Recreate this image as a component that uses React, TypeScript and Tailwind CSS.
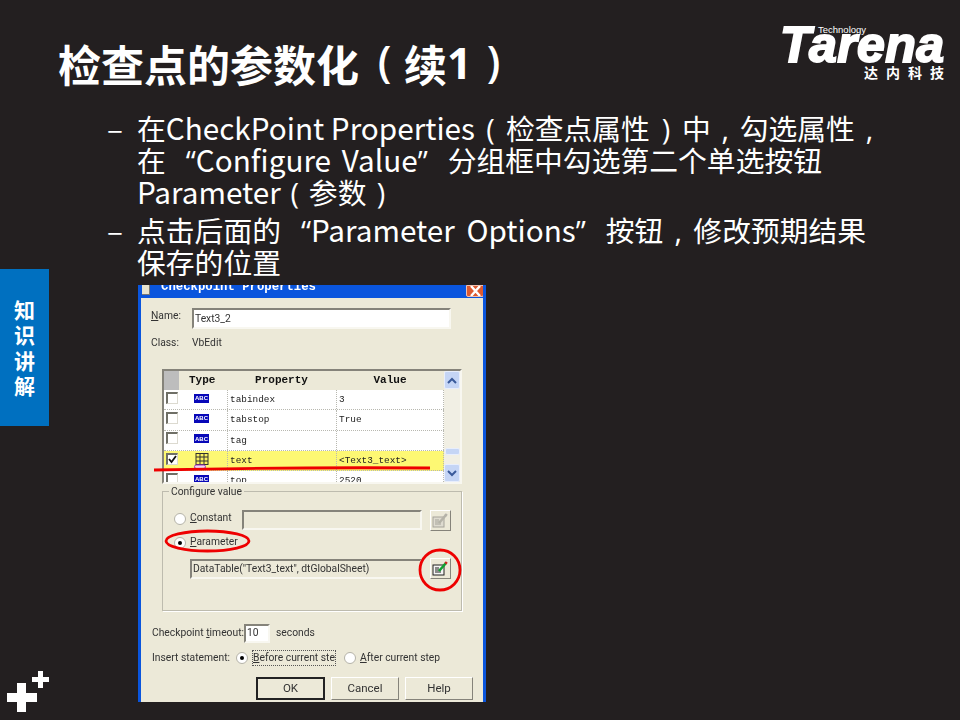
import React from "react";

const cn = '"Open Sans","Noto Sans CJK SC",sans-serif';

function Abc() {
  return (
    <div className="flex items-center justify-center w-[15px] h-[9px] -mt-[3px] -ml-[3px] bg-[#0808b8] text-white text-[6px] font-bold leading-none font-['Liberation_Sans']">
      ABC
    </div>
  );
}

function TableIcon() {
  return (
    <svg className="-ml-[3px]" width="16" height="16" viewBox="0 0 16 16">
      <rect x="2" y="0.5" width="12" height="11" fill="#f8f060" stroke="#303030" />
      <path d="M6 0v11M10 0v11M2 4h12M2 8h12" stroke="#303030" />
      <rect x="0.5" y="12" width="11" height="3.5" rx="1.7" fill="#f0d8f0" stroke="#a030c0" />
    </svg>
  );
}

function Check({ on }: { on?: boolean }) {
  return (
    <div className="flex items-center justify-center w-[12px] h-[12px] -mt-[4px] -ml-[1px] bg-white border-t-2 border-l-2 border-t-[#6f6f66] border-l-[#6f6f66] border-r border-b border-r-[#dcdad0] border-b-[#dcdad0]">
      {on && (
        <svg width="9" height="9" viewBox="0 0 9 9">
          <path d="M1 4l2.5 3L8 1" fill="none" stroke="#111" strokeWidth="1.8" />
        </svg>
      )}
    </div>
  );
}

function Row({ on, icon, prop, value, hi }: { on?: boolean; icon: React.ReactNode; prop: string; value: string; hi?: boolean }) {
  return (
    <div className={`grid grid-cols-[63px_109px_108px] h-[20.3px] shrink-0 items-center border-b border-dotted border-b-[#b8b8b0] font-['Liberation_Mono'] text-[9.4px] text-[#222] ${hi ? "bg-[#fdf873]" : "bg-white"}`}>
      <div className="flex items-center h-full">
        <div className="w-[31px] pl-[3px]"><Check on={on} /></div>
        <div className="w-[16px] flex justify-center">{icon}</div>
      </div>
      <div className="pl-[2px] h-full flex items-center border-l border-dotted border-l-[#b8b8b0]">{prop}</div>
      <div className="pl-[2px] h-full flex items-center border-l border-r border-dotted border-l-[#b8b8b0] border-r-[#b8b8b0]">{value}</div>
    </div>
  );
}

function ScrollBtn({ up }: { up?: boolean }) {
  return (
    <div className="w-[16px] h-[18px] rounded-[2px] bg-[#c5d5f5] border border-[#e8eefc] flex items-center justify-center">
      <svg width="10" height="7" viewBox="0 0 10 7">
        <path d={up ? "M1 6l4-4 4 4" : "M1 1l4 4 4-4"} fill="none" stroke="#3a5a9a" strokeWidth="2" />
      </svg>
    </div>
  );
}

function Radio({ on }: { on?: boolean }) {
  return (
    <div className="w-[12px] h-[12px] rounded-full bg-white border border-[#b5b3a8] flex items-center justify-center shrink-0">
      {on && <div className="w-[4px] h-[4px] rounded-full bg-black" />}
    </div>
  );
}

function Field({ w, children }: { w: string; children?: React.ReactNode }) {
  return (
    <div className={`${w} h-[20px] flex items-center pl-[1px] pt-[2px] border-2 border-t-[#85837a] border-l-[#85837a] border-r-[#f8f7f0] border-b-[#f8f7f0] whitespace-nowrap`}>
      {children}
    </div>
  );
}

function EditBtn({ active }: { active?: boolean }) {
  return (
    <div className="w-[21px] h-[21px] bg-[#ece9d8] border border-t-white border-l-white border-r-[#85837a] border-b-[#85837a] flex items-center justify-center">
      <svg width="17" height="15" viewBox="0 0 17 15">
        <rect x="1" y="4" width="11" height="10" fill={active ? "#f4f4f4" : "#dedbd0"} stroke={active ? "#202020" : "#a5a39a"} />
        <path d="M3 7h4M3 9h6M3 11h6" stroke={active ? "#202020" : "#a5a39a"} />
        <path d="M7 10l7-8" stroke={active ? "#10a030" : "#b5b3a8"} strokeWidth="2.6" />
        <path d="M13.4 2.6l1.4-1.6" stroke={active ? "#d02020" : "#b5b3a8"} strokeWidth="2.6" />
      </svg>
    </div>
  );
}

function Btn({ label, def }: { label: string; def?: boolean }) {
  return (
    <div className={`h-[23px] flex items-center justify-center bg-[#ece9d8] ${def ? "w-[69px] border-2 border-[#222]" : "w-[68px] border border-t-white border-l-white border-r-[#85837a] border-b-[#85837a]"}`}>
      {label}
    </div>
  );
}

function Dialog() {
  return (
    <div className="relative ml-[80px] w-[348px] h-[417px] bg-[#0a55dd] px-[3px] flex flex-col overflow-hidden blur-[0.35px] font-['Roboto'] text-[10.3px] text-[#333] leading-none">
      <div className="h-[13px] shrink-0 flex items-start justify-between overflow-hidden">
        <div className="flex items-start pl-[1px] gap-[11px]">
          <div className="w-[8px] h-[10px] bg-[#e8e4d0] border-r border-b border-[#777]" />
          <div className="font-['Liberation_Mono'] font-bold text-[12.3px] leading-[11px] -mt-[3px] text-white whitespace-nowrap">Checkpoint Properties</div>
        </div>
        <div className="w-[18px] h-[12px] mr-[-1px] bg-[#dd5a30] border border-[#f0c0b0] rounded-b-[2px] flex items-center justify-center">
          <svg width="11" height="10" viewBox="0 0 11 10"><path d="M1 0l9 10M10 0L1 10" stroke="#fff" strokeWidth="2.4" /></svg>
        </div>
      </div>
      <div className="flex-1 bg-[#ece9d8] pt-[10px] pl-[10px]">
        <div className="flex items-center h-[21px]">
          <div className="w-[41px] -mt-[4px]"><span className="underline">N</span>ame:</div>
          <div className="w-[259px] h-[21px] flex items-center pl-[1px] pt-[1px] bg-white border-2 border-t-[#85837a] border-l-[#85837a] border-r-[#f8f7f0] border-b-[#f8f7f0]">Text3_2</div>
        </div>
        <div className="flex items-center h-[20px] mt-[4px] pt-[1px]">
          <div className="w-[41px]">Class:</div>
          <div>VbEdit</div>
        </div>
        <div className="ml-[11px] mt-[16px] w-[300px] h-[115px] flex border-2 border-t-[#85837a] border-l-[#85837a] border-r-[#f8f7f0] border-b-[#f8f7f0] bg-[#f1efe4] overflow-hidden">
          <div className="w-[280px] flex flex-col shrink-0 overflow-hidden">
            <div className="grid grid-cols-[63px_109px_108px] h-[19px] shrink-0 items-center bg-[#ece9d8] font-['Liberation_Mono'] font-bold text-[11px] text-[#111] text-center">
              <div className="flex items-center h-full">
                <div className="w-[15px] h-full bg-[#bdbdbd]" />
                <div className="pl-[10px]">Type</div>
              </div>
              <div>Property</div>
              <div>Value</div>
            </div>
            <Row icon={<Abc />} prop="tabindex" value="3" />
            <Row icon={<Abc />} prop="tabstop" value="True" />
            <Row icon={<Abc />} prop="tag" value="" />
            <Row on hi icon={<TableIcon />} prop="text" value="<Text3_text>" />
            <Row icon={<Abc />} prop="top" value="2520" />
          </div>
          <div className="flex-1 flex flex-col justify-between items-center">
            <ScrollBtn up />
            <div className="flex-1 flex flex-col justify-end pb-[9px]">
              <div className="w-[15px] h-[7px] rounded-[2px] bg-[#c5d5f5] border border-[#e8eefc]" />
            </div>
            <ScrollBtn />
          </div>
        </div>
        <div className="relative ml-[11px] mt-[7px] w-[300px] h-[120px] border border-[#bdbbae] shadow-[1px_1px_0_#fff] pt-[17px] pl-[11px]">
          <div className="absolute -top-[5px] left-[6px] bg-[#ece9d8] px-[2px]">Configure value</div>
          <div className="flex items-center h-[22px]">
            <div className="flex items-center w-[68px] -mt-[3px]">
              <Radio />
              <div className="pl-[4px]"><span className="underline">C</span>onstant</div>
            </div>
            <Field w="w-[180px]" />
            <div className="ml-[8px]"><EditBtn /></div>
          </div>
          <div className="flex items-center h-[21px] mt-[1px]">
            <Radio on />
            <div className="pl-[4px]"><span className="underline">P</span>arameter</div>
          </div>
          <div className="flex items-center mt-[5px] ml-[16px]">
            <Field w="w-[232px]">DataTable("Text3_text", dtGlobalSheet)</Field>
            <div className="ml-[8px]"><EditBtn active /></div>
          </div>
        </div>
        <div className="flex items-center h-[19px] mt-[13px] pl-[1px]">
          <div className="w-[92px] whitespace-nowrap">Checkpoint <span className="underline">t</span>imeout:</div>
          <div className="w-[26px] h-[19px] flex items-center pl-[1px] bg-white border-2 border-t-[#85837a] border-l-[#85837a] border-r-[#f8f7f0] border-b-[#f8f7f0]">10</div>
          <div className="pl-[6px]">seconds</div>
        </div>
        <div className="flex items-center h-[22px] mt-[4px] pl-[1px]">
          <div className="w-[84px] whitespace-nowrap">Insert statement:</div>
          <Radio on />
          <div className="ml-[4px] w-[84px] h-[16px] flex items-center whitespace-nowrap overflow-hidden border border-dotted border-[#555]"><span className="underline">B</span>efore current step</div>
          <div className="ml-[8px]"><Radio /></div>
          <div className="pl-[4px] whitespace-nowrap"><span className="underline">A</span>fter current step</div>
        </div>
        <div className="flex gap-[6px] mt-[8px] ml-[105px] text-[11.5px]">
          <Btn label="OK" def />
          <Btn label="Cancel" />
          <Btn label="Help" />
        </div>
      </div>
      <svg className="absolute left-0 top-0" width="348" height="417" viewBox="0 0 348 417" fill="none" stroke="#ee0000" strokeWidth="2.8">
        <path d="M16 185q140-3 276-2" />
        <ellipse cx="69.5" cy="256" rx="41.5" ry="10" />
        <circle cx="302" cy="285" r="20" />
      </svg>
    </div>
  );
}

function L({ children }: { children: React.ReactNode }) {
  return <span className="text-[29.7px]">{children}</span>;
}

function Line({ children, className = "" }: { children: React.ReactNode; className?: string }) {
  return <div className={`h-[32px] whitespace-nowrap ${className}`}>{children}</div>;
}

function Item({ children, className = "" }: { children: React.ReactNode; className?: string }) {
  return (
    <div className={`flex ml-[49px] ${className}`}>
      <div className="w-[30px] shrink-0 text-[29.7px] leading-[32px]">–</div>
      <div>{children}</div>
    </div>
  );
}

export default function App() {
  return (
    <div className="w-[960px] h-[720px] bg-[#231f20] flex overflow-hidden" lang="zh-CN" style={{ fontFamily: cn }}>
      <aside className="w-[49px] shrink-0 flex flex-col pt-[269px] pb-[8px]">
        <div className="h-[157px] bg-[#0070c0] flex flex-col items-center justify-center text-white font-bold text-[21px] leading-[25.5px] font-['Noto_Sans_CJK_SC']">
          <span>知</span>
          <span>识</span>
          <span>讲</span>
          <span>解</span>
        </div>
        <svg className="mt-auto" width="49" height="41" viewBox="0 0 49 41" fill="#fff">
          <path d="M17 12h9v10h11v9H26v10h-9V31H7v-9h10z" />
          <path d="M38 0h5v6h6v5h-6v6h-5v-6h-6V6h6z" />
        </svg>
      </aside>
      <main className="flex-1 pl-[9px] flex flex-col">
        <header className="h-[112px] shrink-0 flex justify-between pr-[16px]">
          <h1 className="pt-[36px] text-[43px] leading-[54px] font-bold text-white font-['Noto_Sans_CJK_SC'] whitespace-nowrap flex">
            <span>检查点的参数化</span>
            <span className="w-[45px] pl-[6px] text-center font-['Open_Sans'] font-semibold -mt-[2px]">(</span>
            <span>续</span>
            <span className="font-['Open_Sans']">1</span>
            <span className="w-[44px] text-center font-['Open_Sans'] font-semibold -mt-[2px]">)</span>
          </h1>
          <div className="relative w-[162px] h-[56px] mt-[24px] text-white font-['Liberation_Sans'] font-bold">
            <div className="absolute left-[-2px] top-[-4px] italic text-[50px] leading-[50px] [-webkit-text-stroke:2px_white] whitespace-nowrap">
              <span className="tracking-[-1.5px]">T</span>
              <span className="tracking-[0.4px]">arena</span>
            </div>
            <div className="absolute left-[36px] top-[1px] font-normal text-[9.5px] leading-[10px] whitespace-nowrap">Technology</div>
            <div className="absolute right-0 top-[40px] text-[14px] leading-[16px] tracking-[8px] mr-[-8px] font-['Noto_Sans_CJK_SC'] whitespace-nowrap">达内科技</div>
          </div>
        </header>
        <div className="text-white text-[28.8px] leading-[32px] font-['Noto_Sans_CJK_SC']">
          <Item>
            <Line>
              在<L>CheckPoint Properties</L>
              <span className="inline-block w-[31px] text-center font-['Open_Sans']">(</span>
              检查点属性
              <span className="inline-block w-[32px] text-center font-['Open_Sans']">)</span>
              中
              <span className="inline-block w-[29px] text-center font-['Open_Sans']">,</span>
              勾选属性
              <span className="inline-block w-[29px] text-center font-['Open_Sans']">,</span>
            </Line>
            <Line>
              在
              <span className="inline-block w-[30px] text-right font-['Open_Sans']">“</span>
              <span className="[word-spacing:4px]"><L>Configure Value</L></span>
              <span className="inline-block w-[30px] text-left font-['Open_Sans']">”</span>
              分组框中勾选第二个单选按钮
            </Line>
            <Line>
              <L>Parameter</L>
              <span className="inline-block w-[28px] text-center font-['Open_Sans']">(</span>
              参数
              <span className="inline-block w-[29px] text-center font-['Open_Sans']">)</span>
            </Line>
          </Item>
          <Item className="mt-[6px]">
            <Line>
              点击后面的
              <span className="inline-block w-[30px] text-right font-['Open_Sans']">“</span>
              <span className="[word-spacing:5px]"><L>Parameter Options</L></span>
              <span className="inline-block w-[30px] text-left font-['Open_Sans']">”</span>
              按钮
              <span className="inline-block w-[30px] text-center font-['Open_Sans']">,</span>
              修改预期结果
            </Line>
            <Line>保存的位置</Line>
          </Item>
        </div>
        <div className="mt-[7px]">
          <Dialog />
        </div>
      </main>
    </div>
  );
}
